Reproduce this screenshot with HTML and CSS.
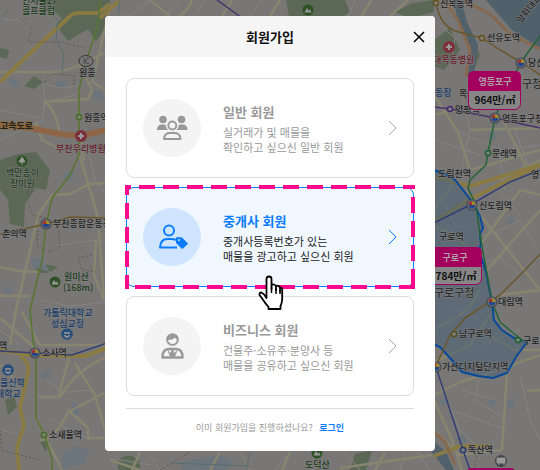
FILE: index.html
```
<!DOCTYPE html>
<html lang="ko">
  <head>
    <meta charset="UTF-8" />
    <meta name="viewport" content="width=device-width, initial-scale=1.0" />
    <title>회원가입</title>
    <link rel="stylesheet" href="styles.css">
  </head>
  <body>
    <!-- Map behind the modal -->
    <svg class="map" viewBox="0 0 540 470" preserveAspectRatio="xMidYMid slice">
      <defs>
        <g id="station">
          <circle r="5" fill="#777" stroke="#454a52" stroke-width="1.2" />
          <path d="M-3.4 0A3.4 3.4 0 0 1 0-3.4V0z" fill="#a03030" />
          <path d="M0-3.4A3.4 3.4 0 0 1 3.4 0H0z" fill="#a08a20" />
          <path d="M-3.4 0A3.4 3.4 0 0 0 3.4 0z" fill="#24468c" />
        </g>
        <g id="hospital">
          <circle r="6" fill="#7c2f3a" />
          <path d="M-3 0H3M0-3V3" stroke="#999" stroke-width="2" />
        </g>
        <g id="hill">
          <circle r="5.5" fill="#2e5226" />
          <path d="M-3.5 2.5L-1-2L1 1L2-1L3.5 2.5z" fill="#999" />
        </g>
        <g id="school">
          <circle r="5.8" fill="#284f7c" />
          <path d="M-3-1H3M-2 1A2 2 0 0 0 2 1" fill="none" stroke="#999" stroke-width="1.6" />
        </g>
      </defs>

      <rect width="540" height="470" fill="#797776" />

      <!-- parks and water -->
      <g class="park">
        <path d="M36 0H110V20L96 42L88 29L68 41L56 25L62 18L52 10z" />
        <path d="M0 48L9 50L7 59L0 57zM24 86L34 76L43 82L34 89z" />
        <path d="M0 160L18 154L36 152L50 170L46 190L36 188L25 204L24 227L10 224L8 200L0 190z" />
        <path d="M35 268Q46 262 58 267L50 272Q38 276 35 268zM5 400L14 396L17 407L8 415zM40 442L50 440L46 452z" />
        <path d="M286 0H345L350 12L335 22H290zM395 12L412 3L434 0V12L410 18z" />
        <path d="M118 460Q130 450 140 462V470H118zM355 454L372 450L366 470H350z" />
        <path d="M434 40L450 28L460 50L444 70L434 66zM470 35L480 55L474 70z" />
      </g>
      <path class="water" d="M486 0H540V48L512 30z" />
      <path class="water" d="M461 0L467 22L478 45L474 75L468 75L471 47L459 25L453 0zM430 438L446 452L454 470H446L430 450z" />
      <g class="block">
        <path d="M10 78L20 82L16 88L8 84zM55 84L65 80L68 87L60 89zM92 94L100 90L104 98L96 102zM64 173L74 170L73 180L65 182zM30 258L42 258L50 272L34 268zM3 288L10 285L12 292L5 294zM62 452L78 446L90 452L84 464L70 466L62 470zM72 402L80 407L77 416L71 411zM40 374L50 370L52 378L43 380z" />
        <path d="M490 130L498 132L495 140L488 138zM505 220L513 216L516 223L509 226zM490 398L497 401L494 407L488 404zM506 402L514 398L514 406L508 409zM455 438L464 434L467 442L459 445zM440 400L447 397L448 403L442 406zM478 82L490 88L486 98L474 94zM180 462L220 455L235 462L226 470H182z" />
      </g>

      <!-- small streets -->
      <g class="street">
        <path d="M0 18Q14 22 22 18L32 27M34 45L28 60M43 84L45 102L42 121L20 131L0 140M43 84L60 88L78 86M45 102L76 95M0 110L40 118M88 150L95 180L110 200M58 245L96 240L110 242M40 300L70 306L110 302M0 330L20 345M46 380L66 392L90 390M50 418L66 428L90 440M0 430L18 434" />
        <path d="M434 20L455 38L450 70M460 88L470 130L460 175M498 140L505 190M515 130L530 170L540 180M455 130L500 150L540 145M435 140L480 155M490 180L520 215M492 235L520 220L536 246M484 262L500 258L520 275M470 350L520 330M440 385L460 430L480 450M462 390L495 400M450 410L508 430M480 372L475 400L510 422M520 375L530 420L540 440M494 318L482 350M445 305L480 320M440 195L455 225L470 230M436 215L470 250" />
        <path d="M110 8L128 18L150 0M180 0L165 16M205 0L196 14M262 0L250 16M355 0L348 16M110 458L150 465M148 452L160 470M240 452L250 470M290 452L275 470M345 452L360 470M405 452L400 470M418 452L430 470" />
      </g>

      <!-- wide streets -->
      <g class="road">
        <path d="M0 72H55Q70 70 82 64L110 50M110 8L94 75L92 82L110 92M80 66L92 90L88 99L45 102Q55 110 58 125L60 134M36 122L42 140L62 150M81 136L84 160M78 150L90 190L98 218L104 300M52 195L70 194L90 184L110 183M52 195L38 215L30 250L16 310L10 345M0 267L20 271L40 272M0 296H30M96 240L94 275L104 300M0 318L34 347M22 312L40 345L110 345M38 397H60Q75 370 110 355M58 397L70 355M40 440Q55 440 68 412L110 390M68 410L88 428V438H110M75 363L95 395L105 430M36 418L62 470M0 365L15 380" />
        <path d="M434 95L458 132L470 170L540 150M434 115L480 105M456 180L434 210M470 130L540 128M502 118L528 170M500 180L540 160M472 205L540 290M480 245L520 190L540 195M487 270L540 210M500 295L540 290M434 395L460 382L490 373L540 355M507 372L502 450M434 400L452 440L462 470M434 430L460 455L502 450M527 391L540 390M490 315L470 345L434 362M480 330L515 350L540 350M430 225L455 235L482 262M434 330L468 310L480 290" />
        <path d="M150 0L170 16M192 0Q188 12 176 18M222 16L232 0M280 0L270 16M371 0L362 16M390 16L408 0M110 460L140 470M140 452L132 470M220 452L210 470M282 470L290 452M375 470L385 452M340 468L432 455" />
      </g>

      <!-- highways -->
      <g class="highway">
        <path d="M0 82L25 58L68 18Q72 13 80 13H98L110 4" />
        <path d="M0 350L35 356H85L110 347M20 356Q30 362 28 372L20 408L24 425L17 448L19 470" />
        <path d="M100 18L120 0M434 222L472 198L540 165M434 177L470 186L540 165M434 456L460 446H490" />
      </g>
      <path class="orange" d="M0 124L30 128L60 134L81 136L110 129" />
      <path class="orange thin" d="M462 0L490 14L510 34L540 49M444 0L458 20L470 50L466 76M430 428L445 442L455 465" />

      <g class="trail">
        <path d="M20 18L32 27L28 42L60 42L86 48M45 82Q48 73 60 74L74 76V86M30 175L27 200L33 215L46 218M38 230L37 246L50 252L60 247L58 220M92 255L78 258L82 270L96 272M0 430L2 450L40 460M478 452L474 470M160 470L190 452" />
      </g>
      <path class="stream" d="M36 0L58 20L56 40L64 54L62 72M120 0L118 14M0 20L8 10M250 452L246 470M170 463L250 466" />

      <!-- subway lines -->
      <path class="region" d="M434 170L450 176L456 181L463 190L473 203L480 216L483 228L480 234L481 244L479 250L486 272L492 302L494 320L502 330L514 338L527 342L516 357L507 373L493 378L478 376L462 372L450 358L440 347L425 340V170z" />
      <path class="line green" d="M100 0L98 25L85 65L79 90V155L70 175L52 198L46 225L42 260L30 310L33 340L36 355V418L45 436L52 460V470" />
      <path class="line green dark" d="M540 36L521 62L500 105L495 118L488 153L486 165L470 180L468 188L476 205L480 235L492 302L500 322L523 341" />
      <path class="line gold" d="M0 234L46 224L70 217L110 218M436 3Q440 25 455 31L482 38L500 50L521 62L540 75M540 254L525 270L500 295L465 318L450 335L436 366" />
      <path class="line blue" d="M0 351L35 353L72 355L110 342M434 223L472 204L510 182L540 170M436 367L463 450L470 470" />
      <path class="line purple" d="M217 0L242 18M434 107L450 109L495 118L540 128" />

      <g class="stop">
        <circle cx="79" cy="117" r="2.6" stroke="#466e20" />
        <circle cx="44" cy="435" r="2.6" stroke="#466e20" />
        <circle cx="436" cy="3" r="2.6" stroke="#66501c" />
        <circle cx="482" cy="38" r="2.6" stroke="#66501c" />
        <circle cx="450" cy="109" r="2.6" stroke="#422a70" />
        <circle cx="488" cy="153" r="2.6" stroke="#1c6032" />
        <circle cx="454" cy="334" r="2.6" stroke="#55501c" />
        <circle cx="463" cy="450" r="2.6" stroke="#243a70" />
        <circle cx="518" cy="340" r="2.6" stroke="#1c6032" />
      </g>
      <use href="#station" x="46" y="224" />
      <use href="#station" x="35" y="353" />
      <use href="#station" x="521" y="63" />
      <use href="#station" x="495" y="118" />
      <use href="#station" x="472" y="205" />
      <use href="#station" x="492" y="302" />
      <use href="#station" x="436" y="367" />
      <use href="#hospital" x="81" y="136" />
      <use href="#hospital" x="449" y="47" />
      <use href="#hill" x="55" y="282" />
      <use href="#hill" x="308" y="10" />
      <use href="#hill" x="317" y="453" />
      <use href="#school" x="67" y="334" />
      <use href="#school" x="8" y="370" />
      <circle cx="22" cy="161" r="5.5" fill="#2e5226" />
      <path d="M22 157L25 162H19zM22 161V165" fill="#999" stroke="#999" />
      <circle cx="501" cy="461" r="6" fill="#3c4347" />
      <path d="M497 458H505V463H497zM498 464H500M503 464H505" fill="#999" stroke="#999" />
      <ellipse cx="86" cy="61" rx="7" ry="5.5" fill="#777" stroke="#40332c" />
      <text class="ic" x="83" y="64">IC</text>

      <!-- place names -->
      <g class="label">
        <text x="79" y="76">원종</text>
        <text x="84" y="121">원종역</text>
        <text x="53" y="227">부천종합운동장</text>
        <text x="2" y="237">춘의역</text>
        <text x="-1" y="349">역</text>
        <text x="42" y="356">소사역</text>
        <text x="49" y="438">소새울역</text>
        <text x="440" y="7">신목동역</text>
        <text x="487" y="41">선유도역</text>
        <text x="528" y="66">당산역</text>
        <text x="459" y="97">목동</text>
        <text x="455" y="113">양평역</text>
        <text x="502" y="122">영등포구청</text>
        <text x="492" y="157">문래역</text>
        <text x="531" y="178">영등포</text>
        <text x="438" y="177">도림천역</text>
        <text x="479" y="209">신도림역</text>
        <text x="439" y="240">구로역</text>
        <text x="498" y="305">대림역</text>
        <text x="459" y="337">남구로역</text>
        <text x="523" y="344">구로디지털</text>
        <text x="442" y="370">가산디지털단지역</text>
        <text x="468" y="453">독산역</text>
        <text x="522" y="88" class="big">구청</text>
        <text x="434" y="297" class="big">구로구청</text>
        <text x="521" y="24" transform="rotate(-52 521 24)">양화대교</text>
      </g>
      <g class="label bold">
        <text x="0" y="129" class="way">고속도로</text>
      </g>
      <g class="label nature">
        <text x="22" y="4">인서울27</text>
        <text x="22" y="14">골프클럽</text>
        <text x="6" y="176">백만송이</text>
        <text x="10" y="187">장미원</text>
        <text x="64" y="280">원미산</text>
        <text x="63" y="291">(168m)</text>
        <text x="305" y="468">도덕산</text>
      </g>
      <g class="label campus">
        <text x="43" y="316">가톨릭대학교</text>
        <text x="51" y="327">성심교정</text>
        <text x="0" y="386">울신학</text>
        <text x="-4" y="397">대학교</text>
        <text x="435" y="96">동장</text>
      </g>
      <g class="label clinic">
        <text x="56" y="152">부천우리병원</text>
        <text x="433" y="63">대목동병원</text>
      </g>

      <!-- price markers -->
      <rect x="468.5" y="71.5" width="52" height="38" rx="6" fill="#868686" stroke="#a3005e" />
      <path d="M468 91V77Q468 71 474 71H515Q521 71 521 77V91z" fill="#a3005e" />
      <text class="district" x="495" y="85">영등포구</text>
      <text class="price" x="495" y="104">964만/㎡</text>
      <rect x="428.5" y="247.5" width="53" height="37" rx="6" fill="#868686" stroke="#a3005e" />
      <path d="M428 267V247H476Q482 247 482 253V267z" fill="#a3005e" />
      <text class="district" x="455" y="261">구로구</text>
      <text class="price" x="456" y="280">784만/㎡</text>
      <rect x="467" y="468" width="48" height="8" rx="4" fill="#a3005e" />
    </svg>

    <div class="modal" role="dialog" aria-labelledby="modalTitle">
      <div class="modal-header">
        <h1 id="modalTitle">회원가입</h1>
        <button class="close" type="button" aria-label="닫기">
          <svg width="12" height="12" viewBox="0 0 12 12">
            <path d="M1 1L11 11M11 1L1 11" fill="none" stroke="#000" stroke-width="1.5" />
          </svg>
        </button>
      </div>

      <div class="modal-body">
        <button class="card" type="button">
          <span class="icon">
            <svg width="32" height="26" viewBox="0 0 32 26" fill="#999">
              <circle cx="7" cy="4.5" r="3.8" />
              <circle cx="25.5" cy="4.5" r="3.8" />
              <path d="M1 15Q1 9.5 6 9.5H9.5Q10 13 12 15zM31.5 15Q31.5 9.5 26.5 9.5H23Q22.5 13 20.5 15z" />
              <circle cx="16.3" cy="10.5" r="4" fill="#f4f4f4" stroke="#999" stroke-width="1.9" />
              <path d="M8 24V23Q9 18 14 18H18.5Q23.5 18 24.5 23V24z" fill="#f4f4f4" stroke="#999" stroke-width="1.9" stroke-linejoin="round" />
            </svg>
          </span>
          <span class="info">
            <strong>일반 회원</strong>
            <span class="desc">실거래가 및 매물을<br />확인하고 싶으신 일반 회원</span>
          </span>
          <svg class="arrow" width="9" height="16" viewBox="0 0 9 16"><path d="M1 1L8 8L1 15" /></svg>
        </button>

        <button class="card active" type="button">
          <span class="icon">
            <svg width="32" height="26" viewBox="0 0 32 26">
              <circle cx="13" cy="6.5" r="5" fill="none" stroke="#0a7cff" stroke-width="2" />
              <path d="M20 16Q18 15 15 15H11.500Q4.500 15 4 23.500H21" fill="none" stroke="#0a7cff" stroke-width="2" stroke-linejoin="round" />
              <path d="M20 14.5Q20 13 21.5 13L26 13.5L31.5 19Q32 19.7 31.5 20.3L27 24.5Q26.2 25 25.5 24.5L20 19z" fill="#0a7cff" />
              <circle cx="23" cy="16" r="1" fill="#cfe5ff" />
            </svg>
          </span>
          <span class="info">
            <strong>중개사 회원</strong>
            <span class="desc">중개사등록번호가 있는<br />매물을 광고하고 싶으신 회원</span>
          </span>
          <svg class="arrow" width="9" height="16" viewBox="0 0 9 16"><path d="M1 1L8 8L1 15" /></svg>

          <svg class="highlight">
            <line x1="0" y1="2" x2="100%" y2="2" stroke-dashoffset="10" />
            <line x1="0" y1="100%" x2="100%" y2="100%" stroke-dashoffset="14" class="low" />
            <line x1="2" y1="0" x2="2" y2="100%" stroke-dashoffset="6" />
            <line x1="100%" y1="0" x2="100%" y2="100%" stroke-dashoffset="12" class="right" />
          </svg>
          <svg class="cursor" width="26" height="36" viewBox="0 0 26 36">
            <path d="M8.5 23V4Q8.5 1.5 11 1.5T13.500 4V14V11Q14 9 16 9.5T18 12V15V12Q19 10 20.5 11T22 13V16V14Q23 12 24.2 13.5V24Q24 28 22.5 31V34H10.5V32Q7 28 4.5 24L1.5 20Q1 17.5 3.5 17.5Q6 18.5 8.5 23z" fill="#fff" stroke="#000" stroke-width="1.8" stroke-linejoin="round" />
            <path d="M13.5 12V18M18 13V19M22 15V19" stroke="#000" stroke-width="1.5" />
          </svg>
        </button>

        <button class="card" type="button">
          <span class="icon">
            <svg width="32" height="26" viewBox="0 0 32 26">
              <circle cx="16.5" cy="6.500" r="5.4" fill="#f4f4f4" stroke="#999" stroke-width="1.9" />
              <path d="M11 7Q11 1 16.5 1T22 7Q20 7 19 4.5Q17 7 11 7z" fill="#999" />
              <path d="M6.5 24.5V23Q7 16.5 12.5 16H20.5Q26 16.5 26.5 23V24.5z" fill="#f4f4f4" stroke="#999" stroke-width="2.4" stroke-linejoin="round" />
              <path d="M11 16L14.5 25H18.5L22 16L18.5 20L17.5 18L18.5 15.5H14.5L15.5 18L14.5 20z" fill="#999" />
            </svg>
          </span>
          <span class="info">
            <strong>비즈니스 회원</strong>
            <span class="desc">건물주·소유주·분양사 등<br />매물을 공유하고 싶으신 회원</span>
          </span>
          <svg class="arrow" width="9" height="16" viewBox="0 0 9 16"><path d="M1 1L8 8L1 15" /></svg>
        </button>

        <p class="login">이미 회원가입을 진행하셨나요? <a href="#">로그인</a></p>
      </div>
    </div>
  </body>
</html>
```
FILE: styles.css
```
* {
  box-sizing: border-box;
}

body {
  margin: 0;
  padding: 16px;
  background: #797776;
  font-family: "Noto Sans CJK KR", sans-serif;
  color: #222;
}

button {
  font-family: inherit;
  cursor: pointer;
}

/* Map */
.map {
  position: fixed;
  top: 0;
  left: 0;
  width: 100%;
  height: 100%;
}

.park {
  fill: #5c6856;
}

.water {
  fill: #50616b;
}

.block {
  fill: #6c757c;
}

.street,
.road,
.highway,
.orange,
.trail,
.stream,
.line {
  fill: none;
  stroke-linejoin: round;
}

.street {
  stroke: #858483;
  stroke-width: 1;
}

.road {
  stroke: #87846f;
  stroke-width: 2.5;
}

.highway {
  stroke: #8a7b44;
  stroke-width: 4;
}

.orange {
  stroke: #8f6547;
  stroke-width: 6;
}

.orange.thin {
  stroke: #86684e;
  stroke-width: 3;
}

.trail {
  stroke: #655747;
  stroke-dasharray: 2 2;
}

.stream {
  stroke: #5a6d70;
}

.line {
  stroke-width: 1.5;
}

.green {
  stroke: #58752f;
}

.green.dark {
  stroke: #246337;
}

.gold {
  stroke: #68572c;
}

.blue {
  stroke: #343f75;
}

.purple {
  stroke: #49326b;
}

.region {
  fill: #3e5a76;
  fill-opacity: 0.45;
  stroke: #07499a;
  stroke-width: 2;
}

.stop circle {
  fill: #808080;
  stroke-width: 1.5;
}

.label text {
  font-size: 9px;
  font-weight: 500;
  fill: #222;
  stroke: #808080;
  stroke-width: 1;
  paint-order: stroke;
}

.label .big {
  font-size: 11px;
  fill: #303030;
}

.label .way {
  font-weight: 700;
  stroke: #8a6a35;
}

.nature text {
  fill: #1b3a18;
}

.campus text {
  fill: #173c68;
}

.clinic text {
  fill: #661c2b;
}

.ic {
  font-size: 7px;
  fill: #333;
}

.district,
.price {
  font-size: 9px;
  font-weight: 700;
  text-anchor: middle;
  fill: #b0a0a8;
}

.price {
  font-size: 10px;
  fill: #111;
}

/* Modal */
.modal {
  position: relative;
  max-width: 330px;
  margin: 0 auto;
  background: #fff;
  border-radius: 4px;
  overflow: hidden;
}

.modal-header {
  display: flex;
  align-items: center;
  padding: 10px;
  background: #f5f5f5;
}

.modal-header h1 {
  flex: 1;
  margin: 0;
  padding-left: 12px;
  font-size: 13px;
  font-weight: 700;
  line-height: 21px;
  text-align: center;
  color: #111;
}

.close {
  display: flex;
  padding: 0;
  border: none;
  background: none;
}

.modal-body {
  display: flex;
  flex-direction: column;
  gap: 9px;
  padding: 21px 21px 14px;
}

.card {
  position: relative;
  display: flex;
  align-items: center;
  gap: 22px;
  min-height: 100px;
  padding: 16px;
  border: 1px solid #ddd;
  border-radius: 8px;
  background: #fff;
  color: #999;
  text-align: left;
}

.icon {
  display: flex;
  align-items: center;
  justify-content: center;
  width: 58px;
  height: 58px;
  border-radius: 50%;
  background: #f4f4f4;
}

.info {
  flex: 1;
}

.info strong {
  display: block;
  margin-bottom: 3px;
  font-size: 13px;
  font-weight: 700;
  line-height: 20px;
}

.desc {
  display: block;
  font-size: 11px;
  line-height: 15px;
}

.arrow {
  fill: none;
  stroke: #aaa;
}

.card.active {
  border-color: #0a7cff;
  background: #f0f7ff;
  color: #222;
}

.active .icon {
  background: #cfe5ff;
}

.active strong {
  color: #0a7cff;
}

.active .arrow {
  stroke: #0a7cff;
}

/* dashed frame over the selected card */
.highlight {
  position: absolute;
  top: -3px;
  left: -2px;
  width: calc(100% + 4px);
  height: calc(100% + 6px);
  pointer-events: none;
}

.highlight line {
  stroke: #ff0a8c;
  stroke-width: 4;
  stroke-dasharray: 16 8;
}

.highlight .low {
  transform: translateY(-2px);
}

.highlight .right {
  transform: translateX(-2px);
}

.cursor {
  position: absolute;
  left: 131px;
  bottom: -25px;
  z-index: 1;
}

.login {
  margin: 3px 0 0;
  padding-top: 10px;
  border-top: 1px solid #ddd;
  font-size: 9px;
  line-height: 18px;
  text-align: center;
  color: #999;
}

.login a {
  margin-left: 4px;
  font-weight: 700;
  color: #0a7cff;
  text-decoration: none;
}
```
